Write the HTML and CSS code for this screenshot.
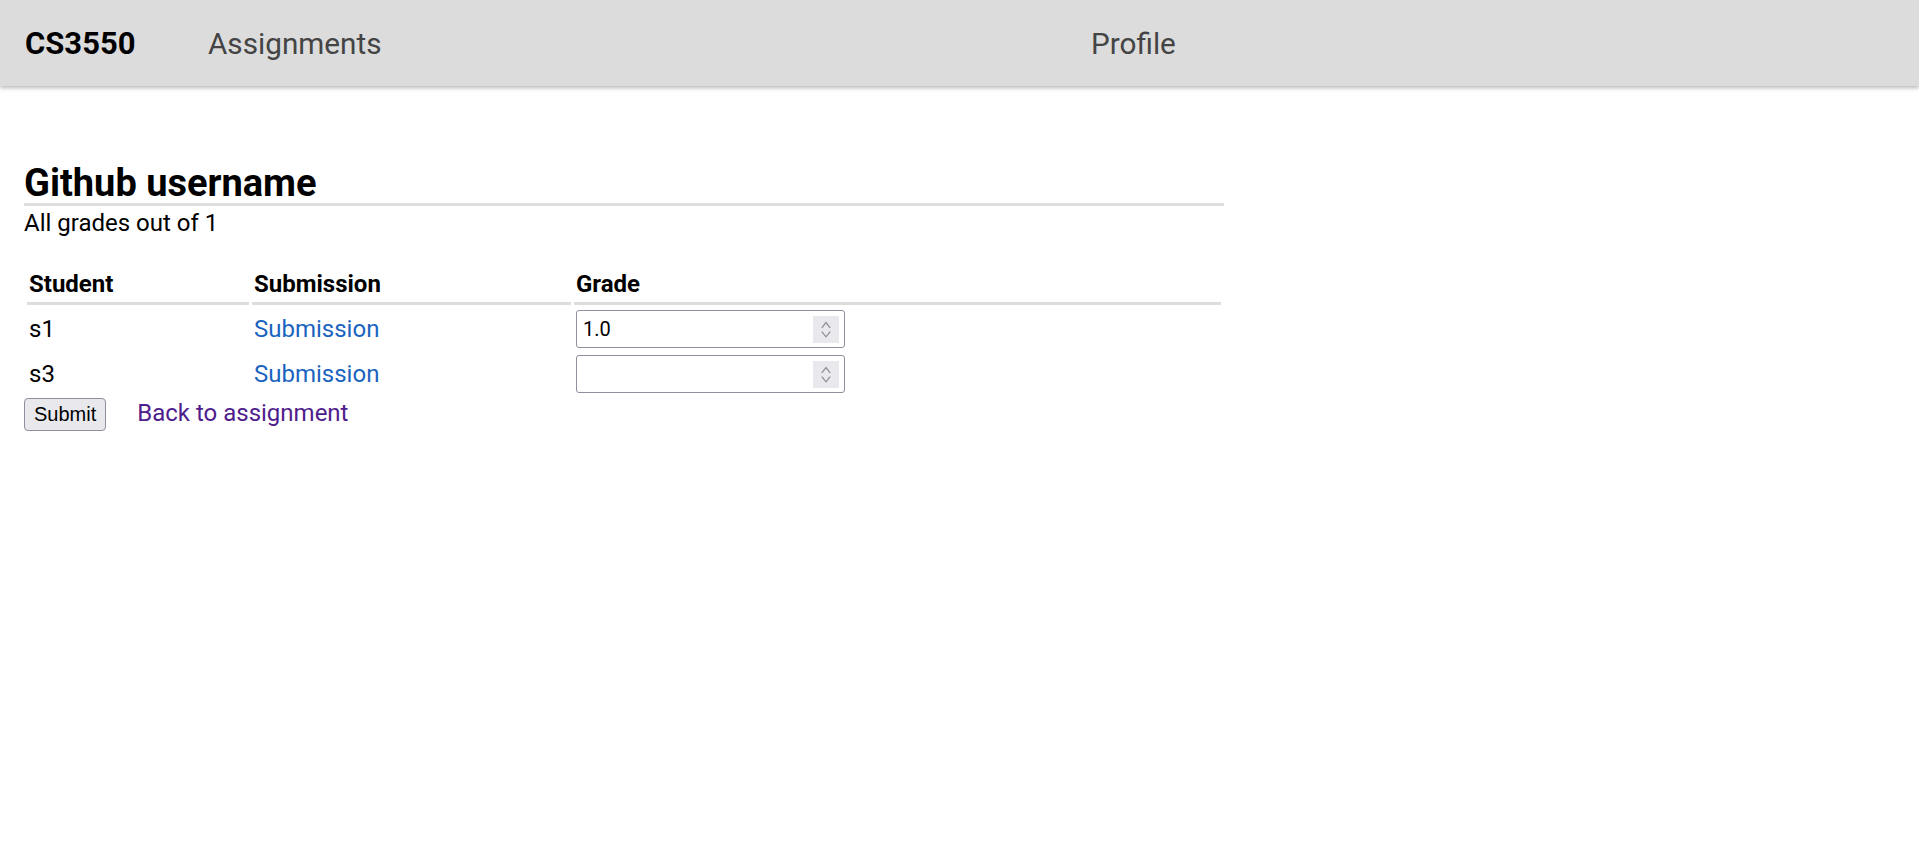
FILE: index.html
```html
<!DOCTYPE html>
<html lang="en">
<head>
<meta charset="utf-8">
<title>Github username - CS3550</title>
<link rel="stylesheet" href="styles.css">
</head>
<body>
<header class="topbar">
  <nav class="nav">
    <a class="brand" href="#">CS3550</a>
    <a class="nav-link" href="#">Assignments</a>
    <a class="nav-link" href="#">Profile</a>
  </nav>
</header>
<main class="main">
  <h2 class="title">Github username</h2>
  <p class="note">All grades out of 1</p>
  <form class="grade-form">
    <table class="grades">
      <colgroup>
        <col class="col-student">
        <col class="col-sub">
        <col class="col-grade">
      </colgroup>
      <thead>
        <tr><th>Student</th><th>Submission</th><th>Grade</th></tr>
      </thead>
      <tbody>
        <tr>
          <td>s1</td>
          <td><a class="sub-link" href="#">Submission</a></td>
          <td>
            <span class="num">
              <input class="num-input" type="number" value="1.0" step="0.1">
              <span class="spin"><svg width="26" height="27" viewBox="0 0 26 27"><path d="M8.8 11.8 L13 6.6 L17.2 11.8" fill="none" stroke="#8f8f96" stroke-width="1.3"/><path d="M8.8 15.6 L13 20.8 L17.2 15.6" fill="none" stroke="#8f8f96" stroke-width="1.3"/></svg></span>
            </span>
          </td>
        </tr>
        <tr>
          <td>s3</td>
          <td><a class="sub-link" href="#">Submission</a></td>
          <td>
            <span class="num">
              <input class="num-input" type="number" step="0.1">
              <span class="spin"><svg width="26" height="27" viewBox="0 0 26 27"><path d="M8.8 11.8 L13 6.6 L17.2 11.8" fill="none" stroke="#8f8f96" stroke-width="1.3"/><path d="M8.8 15.6 L13 20.8 L17.2 15.6" fill="none" stroke="#8f8f96" stroke-width="1.3"/></svg></span>
            </span>
          </td>
        </tr>
      </tbody>
    </table>
    <div class="actions">
      <button class="submit" type="button">Submit</button>
      <a class="back-link" href="#">Back to assignment</a>
    </div>
  </form>
</main>
</body>
</html>
```
FILE: styles.css
```css
* { box-sizing: border-box; }

html, body {
  margin: 0;
  padding: 0;
  background: #ffffff;
}

body {
  font-family: Roboto, "Liberation Sans", sans-serif;
  color: #000;
}

.topbar {
  height: 86px;
  background: #dcdcdc;
  box-shadow: 0 2px 4px rgba(0, 0, 0, 0.28);
  padding-top: 1px;
}

.nav {
  height: 100%;
  display: grid;
  grid-template-columns: 183px 883px auto;
  align-items: center;
  padding-left: 25px;
}

.nav a {
  text-decoration: none;
  font-size: 30px;
}

.brand {
  color: #000;
  font-weight: 700;
}

.nav .brand { font-size: 31px; }

.nav-link {
  color: #444;
  font-weight: 400;
}

.nav .nav-link { font-size: 29.7px; }

.main {
  width: 1200px;
  margin-left: 24px;
  padding-top: 77px;
}

.title {
  margin: 0;
  font-size: 38px;
  font-weight: 700;
  line-height: 40px;
  border-bottom: 3px solid #dddddd;
}

.note {
  margin: 0;
  font-size: 24px;
  line-height: 34px;
}

.grade-form {
  margin-top: 25px;
}

.grades {
  width: 1200px;
  table-layout: fixed;
  border-spacing: 3px;
  font-size: 24px;
}

.col-student { width: 222px; }
.col-sub { width: 319px; }
.col-grade { width: 647px; }

.grades th {
  text-align: left;
  font-weight: 700;
  line-height: 28px;
  padding: 2px 2px 4px;
  border-bottom: 3px solid #dddddd;
}

.grades td {
  line-height: 28px;
  padding: 2px;
  vertical-align: middle;
}

.sub-link {
  color: #1a64bf;
  text-decoration: none;
}

.num {
  position: relative;
  display: inline-block;
  width: 269px;
  height: 38px;
  vertical-align: middle;
}

.num-input {
  display: block;
  width: 269px;
  height: 38px;
  margin: 0;
  padding: 0 36px 0 6px;
  border: 1px solid #8f8f9d;
  border-radius: 3px;
  background: #fff;
  font-family: Roboto, "Liberation Sans", sans-serif;
  font-size: 20px;
  color: #000;
  -moz-appearance: textfield;
  appearance: textfield;
}

.num-input::-webkit-inner-spin-button,
.num-input::-webkit-outer-spin-button {
  -webkit-appearance: none;
  margin: 0;
}

.spin {
  position: absolute;
  top: 6px;
  right: 6px;
  width: 26px;
  height: 27px;
  background: #e9e9ed;
  display: block;
}

.spin svg { display: block; }

.actions {
  display: flex;
  align-items: baseline;
  gap: 31px;
  margin-top: 0;
}

.submit {
  height: 33px;
  padding: 0 9px;
  font-family: "Liberation Sans", Arial, sans-serif;
  font-size: 20px;
  color: #000;
  background: #e9e9ed;
  border: 1px solid #8f8f9d;
  border-radius: 4px;
}

.back-link {
  font-size: 24px;
  color: #4f1d8c;
  text-decoration: none;
}
```
